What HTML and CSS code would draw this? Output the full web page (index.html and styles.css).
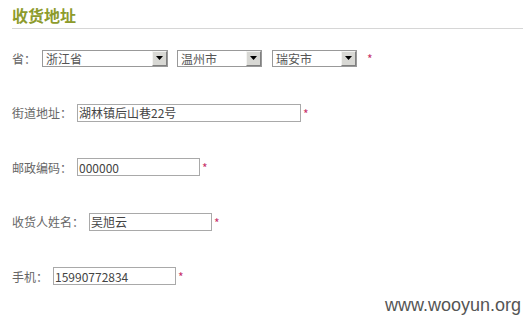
FILE: index.html
```html
<!DOCTYPE html>
<html lang="zh-CN">
<head>
    <meta charset="UTF-8">
    <title>收货地址</title>
    <link rel="stylesheet" href="styles.css">
</head>
<body>
    <div class="container">
        <h2 class="title">收货地址</h2>
        <div class="form">
            <div class="row">
                <span class="label short">省：</span>
                <div class="select wide">
                    <span class="value">浙江省</span>
                    <span class="arrow"><svg width="7" height="4" viewBox="0 0 7 4"><path d="M0 0h7L3.5 4z" fill="#000"/></svg></span>
                </div>
                <div class="select">
                    <span class="value">温州市</span>
                    <span class="arrow"><svg width="7" height="4" viewBox="0 0 7 4"><path d="M0 0h7L3.5 4z" fill="#000"/></svg></span>
                </div>
                <div class="select">
                    <span class="value">瑞安市</span>
                    <span class="arrow"><svg width="7" height="4" viewBox="0 0 7 4"><path d="M0 0h7L3.5 4z" fill="#000"/></svg></span>
                </div>
                <span class="req spaced">*</span>
            </div>
            <div class="row">
                <span class="label">街道地址：</span>
                <input class="field long" type="text" value="湖林镇后山巷22号">
                <span class="req">*</span>
            </div>
            <div class="row">
                <span class="label">邮政编码：</span>
                <input class="field" type="text" value="000000">
                <span class="req">*</span>
            </div>
            <div class="row">
                <span class="label">收货人姓名：</span>
                <input class="field" type="text" value="吴旭云">
                <span class="req">*</span>
            </div>
            <div class="row">
                <span class="label">手机：</span>
                <input class="field" type="text" value="15990772834">
                <span class="req">*</span>
            </div>
        </div>
    </div>
    <div class="watermark">www.wooyun.org</div>
</body>
</html>
```

FILE: styles.css
```css
body {
    margin: 0;
    font-family: "Noto Sans CJK SC", "Liberation Sans", sans-serif;
    font-size: 12px;
    color: #666;
    background-color: #fff;
    position: relative;
    height: 318px;
    overflow: hidden;
}
.container {
    padding-left: 12px;
}
.title {
    margin: 0;
    padding-top: 4px;
    height: 24px;
    line-height: 22px;
    font-size: 16px;
    font-weight: bold;
    color: #8d9b2c;
    border-bottom: 1px solid #d6d6d6;
}
.form {
    padding-top: 2px;
}
.row {
    display: flex;
    align-items: center;
    height: 54.5px;
}
.label {
    color: #666;
    white-space: nowrap;
    margin-right: 5px;
}
.label.short {
    margin-right: 6px;
}
.select {
    display: flex;
    align-items: center;
    justify-content: space-between;
    box-sizing: border-box;
    width: 85px;
    height: 17px;
    border: 1px solid #999;
    background-color: #fff;
    margin-right: 10px;
}
.select.wide {
    width: 126px;
    margin-right: 9px;
}
.select .value {
    padding-left: 3px;
    color: #555;
    line-height: 15px;
}
.select .arrow {
    display: flex;
    align-items: center;
    justify-content: center;
    box-sizing: border-box;
    width: 15px;
    height: 15px;
    background-color: #d8d8d4;
    border: 1px solid;
    border-color: #f4f4f2 #808080 #808080 #f4f4f2;
}
.field {
    box-sizing: border-box;
    width: 123px;
    height: 18px;
    margin: 0;
    padding: 0 1px;
    border: 1px solid #a9a9a9;
    font-family: "Noto Sans CJK SC", "Liberation Sans", sans-serif;
    font-size: 12px;
    color: #444;
    background-color: #fff;
}
.field.long {
    width: 224px;
}
.req {
    color: #c8336a;
    font-size: 12px;
    margin-left: 2px;
    align-self: flex-start;
    margin-top: 19px;
}
.req.spaced {
    margin-left: 0;
}
.watermark {
    position: absolute;
    right: 2px;
    bottom: 2px;
    font-family: "Liberation Sans", Arial, sans-serif;
    font-size: 18px;
    color: #555;
}
```
